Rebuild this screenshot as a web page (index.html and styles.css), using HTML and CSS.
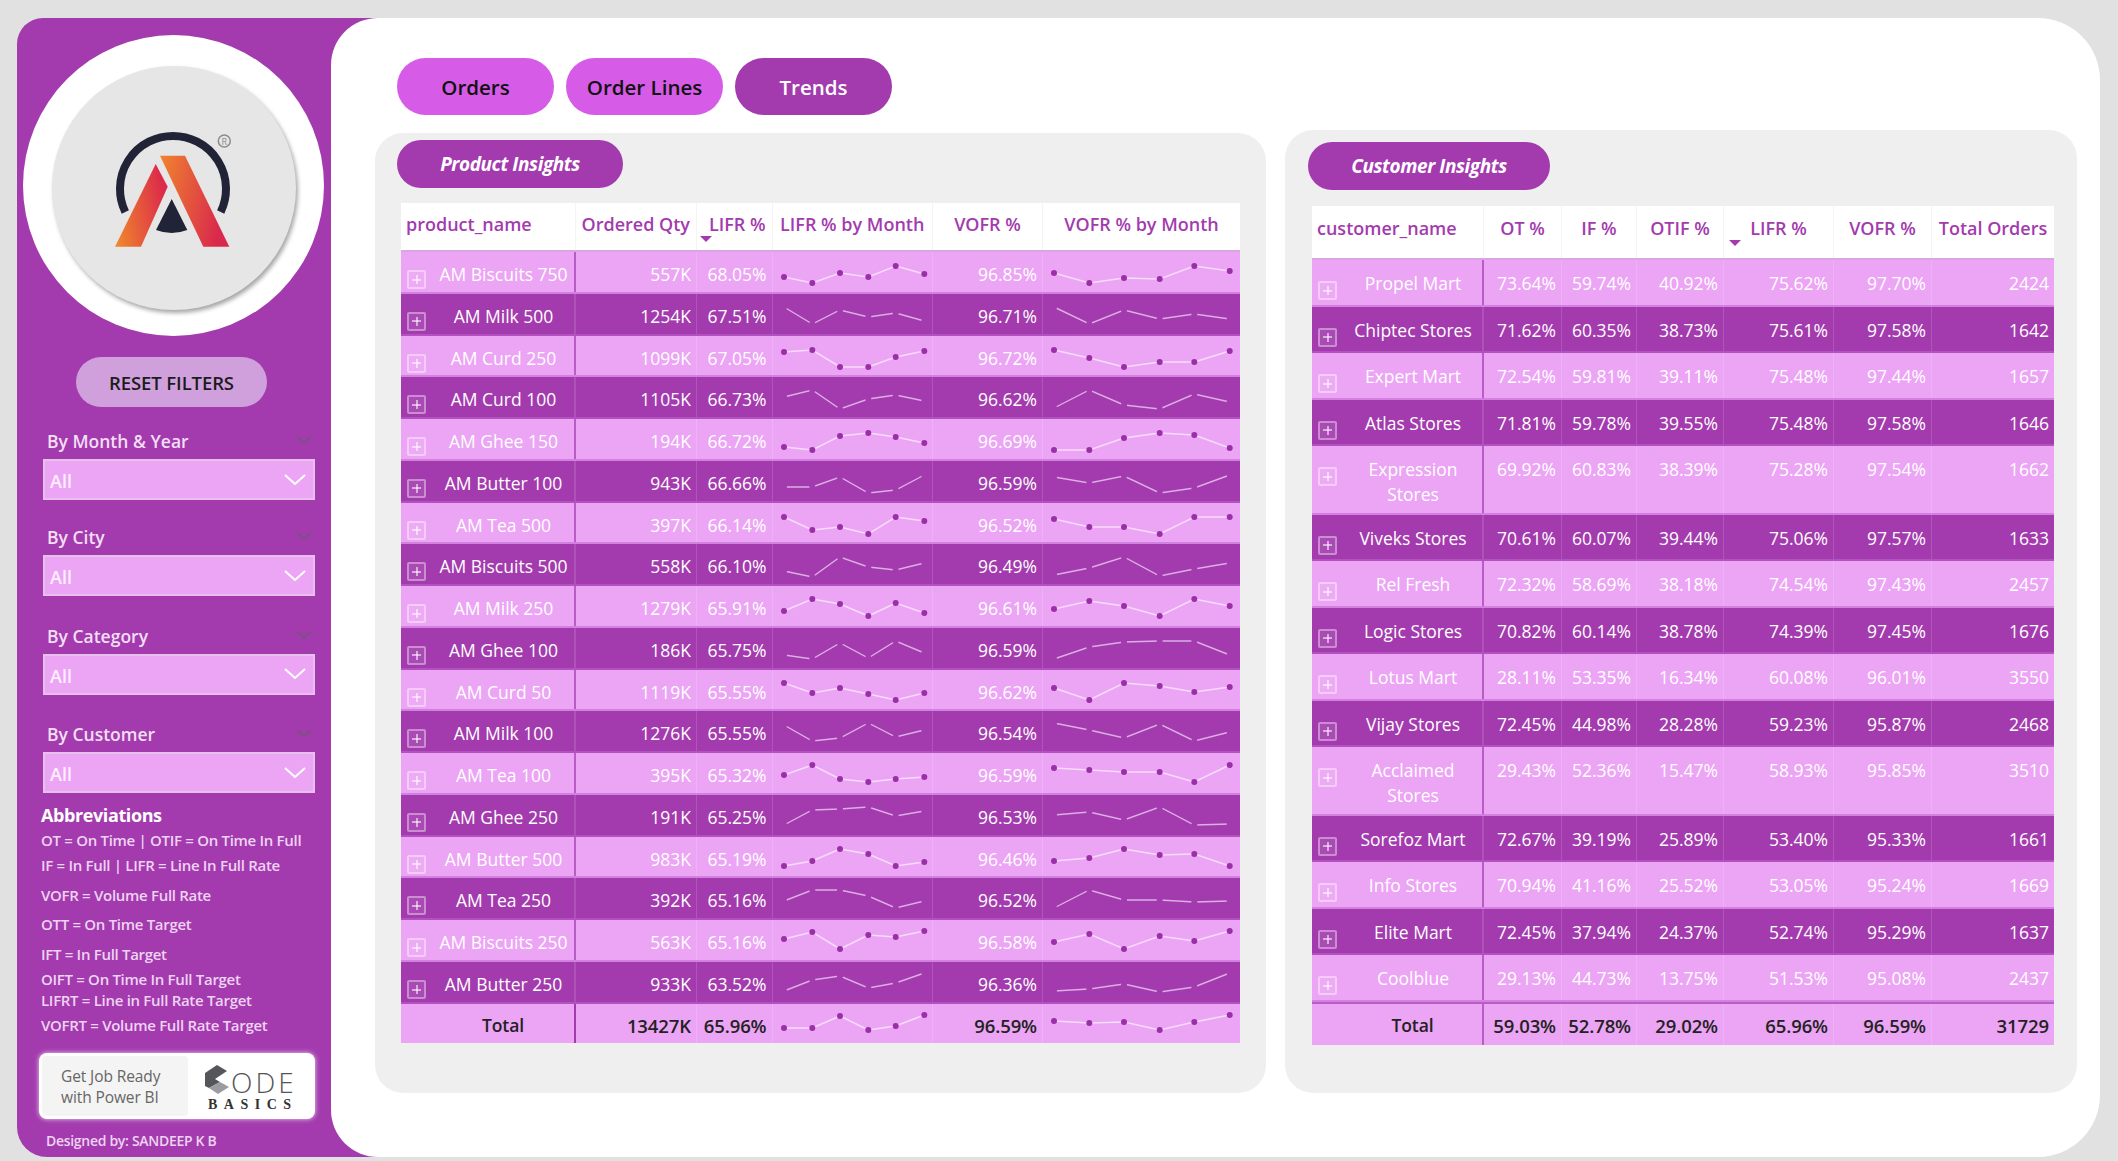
FILE: index.html
```html
<!DOCTYPE html>
<html lang="en">
<head>
    <meta charset="UTF-8">
    <title>Supply Chain Dashboard - Trends</title>
    <link rel="stylesheet" href="styles.css">
</head>
<body>

<div class="frame">

    <aside class="sidebar">
        <div class="logo-ring">
            <div class="logo-disc">
                <svg class="logo" viewBox="0 0 244 244">
                    <defs>
                        <linearGradient id="leg-right" x1="0" y1="0" x2="1" y2="0.3">
                            <stop offset="0" stop-color="#f0842e"/>
                            <stop offset="1" stop-color="#d92a4c"/>
                        </linearGradient>
                        <linearGradient id="leg-left" x1="0" y1="0.9" x2="1" y2="0.6">
                            <stop offset="0" stop-color="#f0882c"/>
                            <stop offset="1" stop-color="#dc2b4a"/>
                        </linearGradient>
                    </defs>
                    <path d="M73.3 146A53 53 0 1 1 168.7 146" fill="none" stroke="#202436" stroke-width="8"/>
                    <polygon points="108,89.7 133,89.7 177.3,180.7 151.3,180.7" fill="url(#leg-right)"/>
                    <polygon points="103.7,98 115.7,120.7 89,180.7 63,180.7" fill="url(#leg-left)"/>
                    <path d="M119.7 133L104 164Q119.7 170 135.3 164Z" fill="#202436"/>
                    <circle cx="172.3" cy="75" r="6" fill="none" stroke="#8c8c8c" stroke-width="1.5"/>
                    <text class="logo-reg" x="172.3" y="78.5">R</text>
                </svg>
            </div>
        </div>

        <button class="reset">RESET FILTERS</button>

        <div class="filters">
            <div class="filter">
                <div class="filter-label">By Month &amp; Year<svg class="chev chev-faint" viewBox="0 0 16 8"><path d="M1 1l7 6 7-6"/></svg></div>
                <div class="filter-box">All<svg class="chev chev-light" viewBox="0 0 22 11"><path d="M1 1l10 9 10-9"/></svg></div>
            </div>
            <div class="filter filter-city">
                <div class="filter-label">By City<svg class="chev chev-faint" viewBox="0 0 16 8"><path d="M1 1l7 6 7-6"/></svg></div>
                <div class="filter-box">All<svg class="chev chev-light" viewBox="0 0 22 11"><path d="M1 1l10 9 10-9"/></svg></div>
            </div>
            <div class="filter">
                <div class="filter-label">By Category<svg class="chev chev-faint" viewBox="0 0 16 8"><path d="M1 1l7 6 7-6"/></svg></div>
                <div class="filter-box">All<svg class="chev chev-light" viewBox="0 0 22 11"><path d="M1 1l10 9 10-9"/></svg></div>
            </div>
            <div class="filter">
                <div class="filter-label">By Customer<svg class="chev chev-faint" viewBox="0 0 16 8"><path d="M1 1l7 6 7-6"/></svg></div>
                <div class="filter-box">All<svg class="chev chev-light" viewBox="0 0 22 11"><path d="M1 1l10 9 10-9"/></svg></div>
            </div>
        </div>

        <div class="abbr">
            <h4>Abbreviations</h4>
            <p>OT = On Time | OTIF = On Time In Full</p>
            <p>IF = In Full | LIFR = Line In Full Rate</p>
            <p class="abbr-wide">VOFR = Volume Full Rate</p>
            <p class="abbr-wide">OTT = On Time Target</p>
            <p class="abbr-wide">IFT = In Full Target</p>
            <p>OIFT = On Time In Full Target</p>
            <p class="abbr-tight">LIFRT = Line in Full Rate Target</p>
            <p>VOFRT = Volume Full Rate Target</p>
        </div>

        <div class="banner">
            <div class="banner-text">Get Job Ready<br>with Power BI</div>
            <div class="banner-brand">
                <div class="brand-top">
                    <svg class="brand-icon" viewBox="0 0 24 29">
                        <polygon points="12,0 22,6 10,14 15,17 4,23 0,21 0,8" fill="#54565a"/>
                        <polygon points="15,17 24,22 13,29 4,23" fill="#9a9c9f"/>
                    </svg>
                    <span class="brand-ode">ODE</span>
                </div>
                <div class="brand-sub">BASICS</div>
            </div>
        </div>

        <div class="credit">Designed by: SANDEEP K B</div>
    </aside>

    <main class="main">
        <nav class="tabs">
            <a class="tab" href="#">Orders</a>
            <a class="tab" href="#">Order Lines</a>
            <a class="tab tab-active" href="#">Trends</a>
        </nav>

        <div class="panels">

            <section class="panel panel-product">
                <div class="pill">Product Insights</div>
                <div class="grid-table product-table">
                    <div class="row row-head">
                        <div class="cell head-left">product_name</div>
                        <div class="cell head-right">Ordered Qty</div>
                        <div class="cell head-right">LIFR %<span class="sort-arrow"></span></div>
                        <div class="cell">LIFR % by Month</div>
                        <div class="cell">VOFR %</div>
                        <div class="cell">VOFR % by Month</div>
                    </div>
                    <div class="row row-light"><div class="cell cell-name"><span class="expand"></span><span class="name">AM Biscuits 750</span></div><div class="cell cell-num">557K</div><div class="cell cell-num">68.05%</div><div class="cell"><svg class="spark spark-lifr" data-y="25,31,21,25,14,22"></svg></div><div class="cell cell-num">96.85%</div><div class="cell"><svg class="spark spark-vofr" data-y="21,31,26,27,14,19"></svg></div></div>
                    <div class="row row-dark"><div class="cell cell-name"><span class="expand"></span><span class="name">AM Milk 500</span></div><div class="cell cell-num">1254K</div><div class="cell cell-num">67.51%</div><div class="cell"><svg class="spark spark-lifr" data-y="13,30,16,23,19,27"></svg></div><div class="cell cell-num">96.71%</div><div class="cell"><svg class="spark spark-vofr" data-y="13,30,16,25,20,25"></svg></div></div>
                    <div class="row row-light"><div class="cell cell-name"><span class="expand"></span><span class="name">AM Curd 250</span></div><div class="cell cell-num">1099K</div><div class="cell cell-num">67.05%</div><div class="cell"><svg class="spark spark-lifr" data-y="16,14,31,31,21,15"></svg></div><div class="cell cell-num">96.72%</div><div class="cell"><svg class="spark spark-vofr" data-y="14,22,31,26,26,15"></svg></div></div>
                    <div class="row row-dark"><div class="cell cell-name"><span class="expand"></span><span class="name">AM Curd 100</span></div><div class="cell cell-num">1105K</div><div class="cell cell-num">66.73%</div><div class="cell"><svg class="spark spark-lifr" data-y="20,13,32,22,18,24"></svg></div><div class="cell cell-num">96.62%</div><div class="cell"><svg class="spark spark-vofr" data-y="31,13,28,32,17,25"></svg></div></div>
                    <div class="row row-light"><div class="cell cell-name"><span class="expand"></span><span class="name">AM Ghee 150</span></div><div class="cell cell-num">194K</div><div class="cell cell-num">66.72%</div><div class="cell"><svg class="spark spark-lifr" data-y="28,31,17,14,18,24"></svg></div><div class="cell cell-num">96.69%</div><div class="cell"><svg class="spark spark-vofr" data-y="31,31,19,14,16,29"></svg></div></div>
                    <div class="row row-dark"><div class="cell cell-name"><span class="expand"></span><span class="name">AM Butter 100</span></div><div class="cell cell-num">943K</div><div class="cell cell-num">66.66%</div><div class="cell"><svg class="spark spark-lifr" data-y="26,26,16,32,29,14"></svg></div><div class="cell cell-num">96.59%</div><div class="cell"><svg class="spark spark-vofr" data-y="16,22,15,32,27,14"></svg></div></div>
                    <div class="row row-light"><div class="cell cell-name"><span class="expand"></span><span class="name">AM Tea 500</span></div><div class="cell cell-num">397K</div><div class="cell cell-num">66.14%</div><div class="cell"><svg class="spark spark-lifr" data-y="14,27,24,31,14,18"></svg></div><div class="cell cell-num">96.52%</div><div class="cell"><svg class="spark spark-vofr" data-y="16,24,24,31,14,14"></svg></div></div>
                    <div class="row row-dark"><div class="cell cell-name"><span class="expand"></span><span class="name">AM Biscuits 500</span></div><div class="cell cell-num">558K</div><div class="cell cell-num">66.10%</div><div class="cell"><svg class="spark spark-lifr" data-y="27,33,13,23,26,19"></svg></div><div class="cell cell-num">96.49%</div><div class="cell"><svg class="spark spark-vofr" data-y="31,24,13,32,25,19"></svg></div></div>
                    <div class="row row-light"><div class="cell cell-name"><span class="expand"></span><span class="name">AM Milk 250</span></div><div class="cell cell-num">1279K</div><div class="cell cell-num">65.91%</div><div class="cell"><svg class="spark spark-lifr" data-y="25,13,18,30,17,27"></svg></div><div class="cell cell-num">96.61%</div><div class="cell"><svg class="spark spark-vofr" data-y="23,15,20,30,13,20"></svg></div></div>
                    <div class="row row-dark"><div class="cell cell-name"><span class="expand"></span><span class="name">AM Ghee 100</span></div><div class="cell cell-num">186K</div><div class="cell cell-num">65.75%</div><div class="cell"><svg class="spark spark-lifr" data-y="27,31,15,30,13,25"></svg></div><div class="cell cell-num">96.59%</div><div class="cell"><svg class="spark spark-vofr" data-y="31,19,14,13,13,27"></svg></div></div>
                    <div class="row row-light"><div class="cell cell-name"><span class="expand"></span><span class="name">AM Curd 50</span></div><div class="cell cell-num">1119K</div><div class="cell cell-num">65.55%</div><div class="cell"><svg class="spark spark-lifr" data-y="13,23,18,24,30,23"></svg></div><div class="cell cell-num">96.62%</div><div class="cell"><svg class="spark spark-vofr" data-y="18,30,13,16,22,17"></svg></div></div>
                    <div class="row row-dark"><div class="cell cell-name"><span class="expand"></span><span class="name">AM Milk 100</span></div><div class="cell cell-num">1276K</div><div class="cell cell-num">65.55%</div><div class="cell"><svg class="spark spark-lifr" data-y="14,30,27,12,26,19"></svg></div><div class="cell cell-num">96.54%</div><div class="cell"><svg class="spark spark-vofr" data-y="12,19,27,13,30,21"></svg></div></div>
                    <div class="row row-light"><div class="cell cell-name"><span class="expand"></span><span class="name">AM Tea 100</span></div><div class="cell cell-num">395K</div><div class="cell cell-num">65.32%</div><div class="cell"><svg class="spark spark-lifr" data-y="22,12,26,29,26,24"></svg></div><div class="cell cell-num">96.59%</div><div class="cell"><svg class="spark spark-vofr" data-y="15,17,19,19,29,12"></svg></div></div>
                    <div class="row row-dark"><div class="cell cell-name"><span class="expand"></span><span class="name">AM Ghee 250</span></div><div class="cell cell-num">191K</div><div class="cell cell-num">65.25%</div><div class="cell"><svg class="spark spark-lifr" data-y="30,15,14,12,21,16"></svg></div><div class="cell cell-num">96.53%</div><div class="cell"><svg class="spark spark-vofr" data-y="20,17,25,12,30,29"></svg></div></div>
                    <div class="row row-light"><div class="cell cell-name"><span class="expand"></span><span class="name">AM Butter 500</span></div><div class="cell cell-num">983K</div><div class="cell cell-num">65.19%</div><div class="cell"><svg class="spark spark-lifr" data-y="29,24,12,17,29,25"></svg></div><div class="cell cell-num">96.46%</div><div class="cell"><svg class="spark spark-vofr" data-y="24,21,12,18,17,29"></svg></div></div>
                    <div class="row row-dark"><div class="cell cell-name"><span class="expand"></span><span class="name">AM Tea 250</span></div><div class="cell cell-num">392K</div><div class="cell cell-num">65.16%</div><div class="cell"><svg class="spark spark-lifr" data-y="23,12,12,18,30,23"></svg></div><div class="cell cell-num">96.52%</div><div class="cell"><svg class="spark spark-vofr" data-y="30,12,22,22,24,23"></svg></div></div>
                    <div class="row row-light"><div class="cell cell-name"><span class="expand"></span><span class="name">AM Biscuits 250</span></div><div class="cell cell-num">563K</div><div class="cell cell-num">65.16%</div><div class="cell"><svg class="spark spark-lifr" data-y="19,12,29,15,17,11"></svg></div><div class="cell cell-num">96.58%</div><div class="cell"><svg class="spark spark-vofr" data-y="22,14,29,16,21,11"></svg></div></div>
                    <div class="row row-dark"><div class="cell cell-name"><span class="expand"></span><span class="name">AM Butter 250</span></div><div class="cell cell-num">933K</div><div class="cell cell-num">63.52%</div><div class="cell"><svg class="spark spark-lifr" data-y="29,18,14,26,21,11"></svg></div><div class="cell cell-num">96.36%</div><div class="cell"><svg class="spark spark-vofr" data-y="29,27,22,30,25,11"></svg></div></div>
                    <div class="row row-light row-total"><div class="cell cell-name"><span class="name">Total</span></div><div class="cell cell-num">13427K</div><div class="cell cell-num">65.96%</div><div class="cell"><svg class="spark spark-lifr" data-y="24,24,12,26,22,11"></svg></div><div class="cell cell-num">96.59%</div><div class="cell"><svg class="spark spark-vofr" data-y="17,19,18,26,18,11"></svg></div></div>
                </div>
            </section>

            <section class="panel panel-customer">
                <div class="pill">Customer Insights</div>
                <div class="grid-table customer-table">
                    <div class="row row-head">
                        <div class="cell head-left">customer_name</div>
                        <div class="cell">OT %</div>
                        <div class="cell">IF %</div>
                        <div class="cell">OTIF %</div>
                        <div class="cell">LIFR %<span class="sort-arrow"></span></div>
                        <div class="cell">VOFR %</div>
                        <div class="cell">Total Orders</div>
                    </div>
                    <div class="row row-light"><div class="cell cell-name"><span class="expand"></span><span class="name">Propel Mart</span></div><div class="cell cell-num">73.64%</div><div class="cell cell-num">59.74%</div><div class="cell cell-num">40.92%</div><div class="cell cell-num">75.62%</div><div class="cell cell-num">97.70%</div><div class="cell cell-num">2424</div></div>
                    <div class="row row-dark"><div class="cell cell-name"><span class="expand"></span><span class="name">Chiptec Stores</span></div><div class="cell cell-num">71.62%</div><div class="cell cell-num">60.35%</div><div class="cell cell-num">38.73%</div><div class="cell cell-num">75.61%</div><div class="cell cell-num">97.58%</div><div class="cell cell-num">1642</div></div>
                    <div class="row row-light"><div class="cell cell-name"><span class="expand"></span><span class="name">Expert Mart</span></div><div class="cell cell-num">72.54%</div><div class="cell cell-num">59.81%</div><div class="cell cell-num">39.11%</div><div class="cell cell-num">75.48%</div><div class="cell cell-num">97.44%</div><div class="cell cell-num">1657</div></div>
                    <div class="row row-dark"><div class="cell cell-name"><span class="expand"></span><span class="name">Atlas Stores</span></div><div class="cell cell-num">71.81%</div><div class="cell cell-num">59.78%</div><div class="cell cell-num">39.55%</div><div class="cell cell-num">75.48%</div><div class="cell cell-num">97.58%</div><div class="cell cell-num">1646</div></div>
                    <div class="row row-light row-tall"><div class="cell cell-name"><span class="expand"></span><span class="name">Expression<br>Stores</span></div><div class="cell cell-num">69.92%</div><div class="cell cell-num">60.83%</div><div class="cell cell-num">38.39%</div><div class="cell cell-num">75.28%</div><div class="cell cell-num">97.54%</div><div class="cell cell-num">1662</div></div>
                    <div class="row row-dark"><div class="cell cell-name"><span class="expand"></span><span class="name">Viveks Stores</span></div><div class="cell cell-num">70.61%</div><div class="cell cell-num">60.07%</div><div class="cell cell-num">39.44%</div><div class="cell cell-num">75.06%</div><div class="cell cell-num">97.57%</div><div class="cell cell-num">1633</div></div>
                    <div class="row row-light"><div class="cell cell-name"><span class="expand"></span><span class="name">Rel Fresh</span></div><div class="cell cell-num">72.32%</div><div class="cell cell-num">58.69%</div><div class="cell cell-num">38.18%</div><div class="cell cell-num">74.54%</div><div class="cell cell-num">97.43%</div><div class="cell cell-num">2457</div></div>
                    <div class="row row-dark"><div class="cell cell-name"><span class="expand"></span><span class="name">Logic Stores</span></div><div class="cell cell-num">70.82%</div><div class="cell cell-num">60.14%</div><div class="cell cell-num">38.78%</div><div class="cell cell-num">74.39%</div><div class="cell cell-num">97.45%</div><div class="cell cell-num">1676</div></div>
                    <div class="row row-light"><div class="cell cell-name"><span class="expand"></span><span class="name">Lotus Mart</span></div><div class="cell cell-num">28.11%</div><div class="cell cell-num">53.35%</div><div class="cell cell-num">16.34%</div><div class="cell cell-num">60.08%</div><div class="cell cell-num">96.01%</div><div class="cell cell-num">3550</div></div>
                    <div class="row row-dark"><div class="cell cell-name"><span class="expand"></span><span class="name">Vijay Stores</span></div><div class="cell cell-num">72.45%</div><div class="cell cell-num">44.98%</div><div class="cell cell-num">28.28%</div><div class="cell cell-num">59.23%</div><div class="cell cell-num">95.87%</div><div class="cell cell-num">2468</div></div>
                    <div class="row row-light row-tall"><div class="cell cell-name"><span class="expand"></span><span class="name">Acclaimed<br>Stores</span></div><div class="cell cell-num">29.43%</div><div class="cell cell-num">52.36%</div><div class="cell cell-num">15.47%</div><div class="cell cell-num">58.93%</div><div class="cell cell-num">95.85%</div><div class="cell cell-num">3510</div></div>
                    <div class="row row-dark"><div class="cell cell-name"><span class="expand"></span><span class="name">Sorefoz Mart</span></div><div class="cell cell-num">72.67%</div><div class="cell cell-num">39.19%</div><div class="cell cell-num">25.89%</div><div class="cell cell-num">53.40%</div><div class="cell cell-num">95.33%</div><div class="cell cell-num">1661</div></div>
                    <div class="row row-light"><div class="cell cell-name"><span class="expand"></span><span class="name">Info Stores</span></div><div class="cell cell-num">70.94%</div><div class="cell cell-num">41.16%</div><div class="cell cell-num">25.52%</div><div class="cell cell-num">53.05%</div><div class="cell cell-num">95.24%</div><div class="cell cell-num">1669</div></div>
                    <div class="row row-dark"><div class="cell cell-name"><span class="expand"></span><span class="name">Elite Mart</span></div><div class="cell cell-num">72.45%</div><div class="cell cell-num">37.94%</div><div class="cell cell-num">24.37%</div><div class="cell cell-num">52.74%</div><div class="cell cell-num">95.29%</div><div class="cell cell-num">1637</div></div>
                    <div class="row row-light"><div class="cell cell-name"><span class="expand"></span><span class="name">Coolblue</span></div><div class="cell cell-num">29.13%</div><div class="cell cell-num">44.73%</div><div class="cell cell-num">13.75%</div><div class="cell cell-num">51.53%</div><div class="cell cell-num">95.08%</div><div class="cell cell-num">2437</div></div>
                    <div class="row row-light row-total"><div class="cell cell-name"><span class="name">Total</span></div><div class="cell cell-num">59.03%</div><div class="cell cell-num">52.78%</div><div class="cell cell-num">29.02%</div><div class="cell cell-num">65.96%</div><div class="cell cell-num">96.59%</div><div class="cell cell-num">31729</div></div>
                </div>
            </section>

        </div>
    </main>

</div>

<script src="sparks.js"></script>
</body>
</html>
```

FILE: styles.css
```css
* {
    box-sizing: border-box;
}
html, body {
    height: 100%;
}
body {
    margin: 0;
    overflow: hidden;
    background-color: #e1e1e1;
    font-family: "Open Sans", "Noto Sans", sans-serif;
    font-size: 17.5px;
    color: #fff;
}
.frame {
    display: flex;
    height: 1139px;
    margin: 18px 18px 0 17px;
    border-radius: 26px 0 0 30px;
    background: linear-gradient(to right, #a33bae 400px, transparent 400px);
}

/* sidebar */
.sidebar {
    width: 314px;
    flex-shrink: 0;
    display: flex;
    flex-direction: column;
}
.logo-ring {
    width: 301px;
    height: 301px;
    margin: 17px 0 0 6px;
    padding: 31px 29px;
    border-radius: 50%;
    background-color: #fff;
}
.logo-disc {
    width: 244px;
    height: 244px;
    border-radius: 50%;
    background-color: #e6e6e6;
    box-shadow: 2px 3px 4px rgba(0, 0, 0, 0.35);
}
.logo {
    display: block;
    width: 244px;
    height: 244px;
}
.logo-reg {
    font-size: 9px;
    fill: #8c8c8c;
    text-anchor: middle;
}
.reset {
    width: 191px;
    height: 50px;
    margin: 21px 0 0 59px;
    padding: 0;
    border: none;
    border-radius: 25px;
    background-color: #d0a0dc;
    color: #1c1c1c;
    font-family: inherit;
    font-size: 18.5px;
    font-weight: 600;
    letter-spacing: -0.1px;
}
.filters {
    margin-top: 22px;
    padding-left: 26px;
    width: 298px;
}
.filter + .filter {
    margin-top: 27.5px;
}
.filter + .filter-city {
    margin-top: 25px;
}
.filter-label {
    display: flex;
    align-items: center;
    justify-content: space-between;
    height: 30px;
    padding: 0 3px 6px 4px;
    font-size: 17.5px;
    font-weight: 600;
    color: #f3dff6;
}
.filter-box {
    display: flex;
    align-items: center;
    justify-content: space-between;
    height: 41px;
    padding: 3px 7px 0 5px;
    background-color: #eca4f5;
    border: 2px solid #e7c0ee;
    font-size: 18px;
    font-weight: 600;
    color: #fdf0fe;
}
.chev {
    fill: none;
}
.chev-faint {
    width: 16px;
    height: 8px;
    margin-top: -2px;
    stroke: #6d5a72;
    stroke-width: 1.5;
}
.chev-light {
    width: 22px;
    height: 11px;
    margin-top: -4px;
    stroke: #fff;
    stroke-width: 2;
}
.abbr {
    margin-top: 9px;
    padding-left: 24px;
    color: #efd3f3;
    font-size: 15px;
    font-weight: 600;
    letter-spacing: -0.3px;
}
.abbr h4 {
    margin: 0;
    height: 26px;
    line-height: 26px;
    font-size: 18px;
    font-weight: 700;
    letter-spacing: -0.4px;
    color: #fff;
}
.abbr p {
    margin: 0;
    height: 25px;
    line-height: 25px;
    white-space: nowrap;
}
.abbr .abbr-wide {
    margin-top: 4.5px;
}
.abbr .abbr-tight {
    margin-top: -4px;
}
.banner {
    display: flex;
    width: 276px;
    height: 66px;
    margin: 15px 0 0 22px;
    padding: 3px;
    border-radius: 8px;
    background-color: #fff;
    box-shadow: 0 0 5px rgba(255, 255, 255, 0.8);
}
.banner-text {
    width: 146px;
    padding: 10px 0 0 19px;
    border-radius: 4px;
    background-color: #f4f4f4;
    color: #666;
    font-size: 15.5px;
    line-height: 21px;
    letter-spacing: -0.1px;
}
.banner-brand {
    padding: 9px 0 0 17px;
    color: #555;
}
.brand-top {
    display: flex;
    align-items: flex-end;
    height: 29px;
}
.brand-icon {
    width: 24px;
    height: 29px;
}
.brand-ode {
    margin-left: 2px;
    font-size: 28px;
    font-weight: 300;
    line-height: 24px;
    letter-spacing: 3px;
}
.brand-sub {
    margin: 4px 0 0 3px;
    font-family: "Liberation Serif", serif;
    font-size: 14px;
    font-weight: 700;
    line-height: 14px;
    letter-spacing: 6.5px;
    color: #333;
}
.credit {
    margin: 12px 0 0 29px;
    font-size: 14px;
    font-weight: 600;
    letter-spacing: -0.3px;
    color: #efd3f3;
}

/* main area */
.main {
    flex: 1;
    padding: 40px 23px 0 44px;
    border-radius: 47px 62px 62px 47px;
    background-color: #fff;
}
.tabs {
    display: flex;
    gap: 12px;
    margin-left: 22px;
}
.tab {
    width: 157px;
    height: 57px;
    border-radius: 29px;
    background-color: #d65ce8;
    color: #111;
    font-size: 20.5px;
    font-weight: 600;
    line-height: 59px;
    text-align: center;
    text-decoration: none;
}
.tab-active {
    background-color: #a33bae;
    color: #fff;
}
.panels {
    display: flex;
    gap: 19px;
    margin-top: 15px;
}
.panel {
    height: 963px;
    border-radius: 28px;
    background-color: #efefef;
}
.panel-product {
    width: 891px;
    height: 960px;
    margin-top: 3px;
    padding: 7px 0 0 22px;
}
.panel-customer {
    width: 792px;
    padding: 12px 0 0 23px;
}
.pill {
    height: 48px;
    border-radius: 24px;
    background-color: #a33bae;
    font-size: 19px;
    font-style: italic;
    font-weight: 700;
    line-height: 48px;
    text-align: center;
    letter-spacing: -0.4px;
}
.panel-product .pill {
    width: 226px;
}
.panel-customer .pill {
    width: 242px;
}

/* tables */
.grid-table {
    margin-left: 4px;
}
.product-table {
    width: 839px;
    margin-top: 15px;
}
.customer-table {
    width: 742px;
    margin-top: 16px;
}
.row {
    display: grid;
    grid-template-rows: minmax(0, 1fr);
}
.product-table .row {
    grid-template-columns: 175px 121px 75.5px 160.5px 110px 197px;
    height: 41.78px;
}
.customer-table .row {
    grid-template-columns: 172px 78px 75px 87px 110px 98px 122px;
    height: 46.5px;
}
.customer-table .row-tall {
    height: 68.6px;
}
.row-light {
    background-color: #eca4f5;
    color: #fff;
}
.row-dark {
    background-color: #a33bae;
    color: #fff;
}
.row-light, .row-dark {
    border-bottom: 2px solid rgba(192, 100, 205, 0.55);
}
.cell {
    position: relative;
    min-width: 0;
    border-right: 1px solid rgba(255, 255, 255, 0.14);
    white-space: nowrap;
}
.cell:last-child {
    border-right: none;
}
.row-head {
    background-color: #fff;
    color: #a33bae;
    font-size: 18px;
    font-weight: 600;
    text-align: center;
    border-bottom: 2px solid #d9a6e2;
}
.row-head .cell {
    border-right-color: #f4f4f4;
}
.product-table .row-head {
    height: 49px;
    line-height: 42px;
}
.customer-table .row-head {
    height: 54px;
    line-height: 44px;
}
.head-left {
    padding-left: 5px;
    text-align: left;
}
.head-right {
    padding-right: 6px;
    text-align: right;
}
.sort-arrow {
    position: absolute;
    width: 0;
    height: 0;
    border-left: 6px solid transparent;
    border-right: 6px solid transparent;
    border-top: 6px solid #a33bae;
}
.product-table .sort-arrow {
    left: 3px;
    top: 33px;
}
.customer-table .sort-arrow {
    left: 5px;
    top: 34px;
}
.cell-name {
    display: flex;
    border-right: 2px solid #b95cc8;
}
.row-dark .cell-name {
    border-right-color: rgba(255, 255, 255, 0.12);
}
.name {
    flex: 1;
    text-align: center;
}
.expand {
    flex-shrink: 0;
    width: 19px;
    height: 19px;
    border: 2px solid rgba(255, 255, 255, 0.38);
    border-radius: 2px;
    background-color: rgba(255, 255, 255, 0.08);
    background-image: linear-gradient(rgba(255, 255, 255, 0.55), rgba(255, 255, 255, 0.55)), linear-gradient(rgba(255, 255, 255, 0.55), rgba(255, 255, 255, 0.55));
    background-size: 9px 2px, 2px 9px;
    background-position: center;
    background-repeat: no-repeat;
}
.cell-num {
    padding-right: 5px;
    text-align: right;
}
.product-table .cell-name, .product-table .cell-num {
    line-height: 45px;
}
.product-table .cell-name {
    padding-left: 6px;
}
.product-table .expand {
    margin: 18px 7px 0 0;
}
.customer-table .cell-name, .customer-table .cell-num {
    padding-top: 11px;
    line-height: 25px;
}
.customer-table .cell-name {
    padding-left: 6px;
}
.customer-table .expand {
    margin: 10px 7px 0 0;
}
.row-total {
    color: #222;
    font-size: 18.5px;
    font-weight: 600;
    letter-spacing: -0.1px;
}
.row-total .name {
    font-size: 17.5px;
}
.product-table .row-total {
    height: 39px;
    border-bottom: none;
}
.product-table .row-total .cell-name, .product-table .row-total .cell-num {
    line-height: 43px;
}
.product-table .row-total .cell-name {
    border-right-color: #a33bae;
}
.customer-table .row-total {
    height: 43px;
    border-top: 2px solid #b95cc8;
    border-bottom: none;
}
.customer-table .row-total .cell-name, .customer-table .row-total .cell-num {
    padding-top: 9px;
}
.customer-table .row-total .cell-name, .product-table .row-total .cell-name {
    padding-left: 31px;
}
.spark {
    display: block;
    width: 100%;
    height: 41px;
}
.spark polyline {
    fill: none;
    stroke: #f6dcfa;
    stroke-width: 1.6;
}
.spark circle {
    fill: #9a2fa8;
}
.row-dark .spark polyline {
    stroke: #dcaee4;
    stroke-width: 1.4;
}
.row-dark .spark circle {
    fill: #a33bae;
}
```

FILE: sparks.js
```js
// draws the small month trend lines from each svg's data-y list
var LIFR_X = [11, 39.3, 67, 95.3, 122.7, 151.3];
var VOFR_X = [11, 46.3, 81, 116.7, 151.3, 186.7];
var SVG_NS = 'http://www.w3.org/2000/svg';

document.querySelectorAll('.spark').forEach(function (svg) {
    var xs = svg.classList.contains('spark-lifr') ? LIFR_X : VOFR_X;
    var ys = svg.getAttribute('data-y').split(',').map(Number);
    var points = ys.map(function (y, i) {
        return xs[i] + ',' + y;
    });

    var line = document.createElementNS(SVG_NS, 'polyline');
    line.setAttribute('points', points.join(' '));
    svg.appendChild(line);

    ys.forEach(function (y, i) {
        var dot = document.createElementNS(SVG_NS, 'circle');
        dot.setAttribute('cx', xs[i]);
        dot.setAttribute('cy', y);
        dot.setAttribute('r', 3);
        svg.appendChild(dot);
    });
});
```
